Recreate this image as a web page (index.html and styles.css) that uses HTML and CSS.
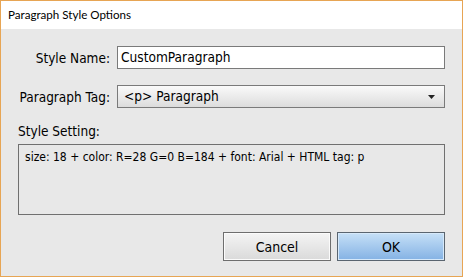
FILE: index.html
```html
<!DOCTYPE html>
<html>
<head>
<meta charset="utf-8">
<link rel="stylesheet" href="styles.css">
</head>
<body>
<div class="window">
  <div class="titlebar">Paragraph Style Options</div>
  <div class="content">
    <div class="form">
      <label class="label">Style Name:</label>
      <div class="input">CustomParagraph</div>
      <label class="label">Paragraph Tag:</label>
      <div class="select"><span>&lt;p&gt; Paragraph</span><svg class="arrow" width="7" height="4" viewBox="0 0 7 4"><path d="M0 0H7L3.5 4Z" fill="#222"/></svg></div>
    </div>
    <div class="section-label">Style Setting:</div>
    <div class="setting">size: 18 + color: R=28 G=0 B=184 + font: Arial + HTML tag: p</div>
    <div class="buttons">
      <div class="btn">Cancel</div>
      <div class="btn primary">OK</div>
    </div>
  </div>
</div>
</body>
</html>
```
FILE: styles.css
```css
html, body {
  margin: 0;
  padding: 0;
}
body {
  width: 463px;
  height: 277px;
  overflow: hidden;
  font-family: "DejaVu Sans Condensed", "DejaVu Sans", sans-serif;
}
.window {
  box-sizing: border-box;
  width: 463px;
  height: 277px;
  border: 1px solid #e7a554;
  display: flex;
  flex-direction: column;
  background: #e8e8e8;
}
.titlebar {
  height: 28px;
  background: #ffffff;
  font-family: Lato, "Noto Sans", sans-serif;
  font-size: 11.6px;
  line-height: 28px;
  padding-left: 7px;
  color: #000;
}
.content {
  flex: 1;
  padding: 17px 17px 0 17px;
  display: flex;
  flex-direction: column;
}
.form {
  display: grid;
  grid-template-columns: 92px 1fr;
  column-gap: 7px;
  row-gap: 16px;
  align-items: center;
}
.label {
  text-align: right;
  white-space: nowrap;
  font-size: 13.5px;
  color: #000;
}
.input {
  box-sizing: border-box;
  height: 23px;
  border: 1px solid #7a7a7a;
  background: #fff;
  font-size: 13.6px;
  line-height: 21px;
  padding-left: 3px;
}
.select {
  box-sizing: border-box;
  height: 23px;
  border: 1px solid #7a7a7a;
  background: linear-gradient(#fafafa, #dcdcdc);
  font-size: 13.6px;
  line-height: 21px;
  padding-left: 6px;
  padding-right: 9px;
  display: flex;
  align-items: center;
  justify-content: space-between;
}
.section-label {
  margin-top: 15px;
  font-size: 13.5px;
  line-height: 16px;
}
.setting {
  box-sizing: border-box;
  margin-top: 5px;
  height: 71px;
  border: 1px solid #707070;
  background: #e8e8e8;
  font-size: 12px;
  padding: 5px 6px;
}
.buttons {
  display: flex;
  justify-content: flex-end;
  gap: 6px;
  margin-top: 17px;
}
.btn {
  box-sizing: border-box;
  width: 108px;
  height: 29px;
  border: 1px solid #6e6e6e;
  background: linear-gradient(#f4f4f4, #dadada);
  box-shadow: inset 0 0 0 1px #fbfbfb;
  font-size: 14px;
  display: flex;
  align-items: center;
  justify-content: center;
}
.btn.primary {
  background: linear-gradient(#c6e0f7, #84b2e4);
  box-shadow: inset 0 0 0 1px #d6e9fa;
  border-color: #5a6570;
}
```
